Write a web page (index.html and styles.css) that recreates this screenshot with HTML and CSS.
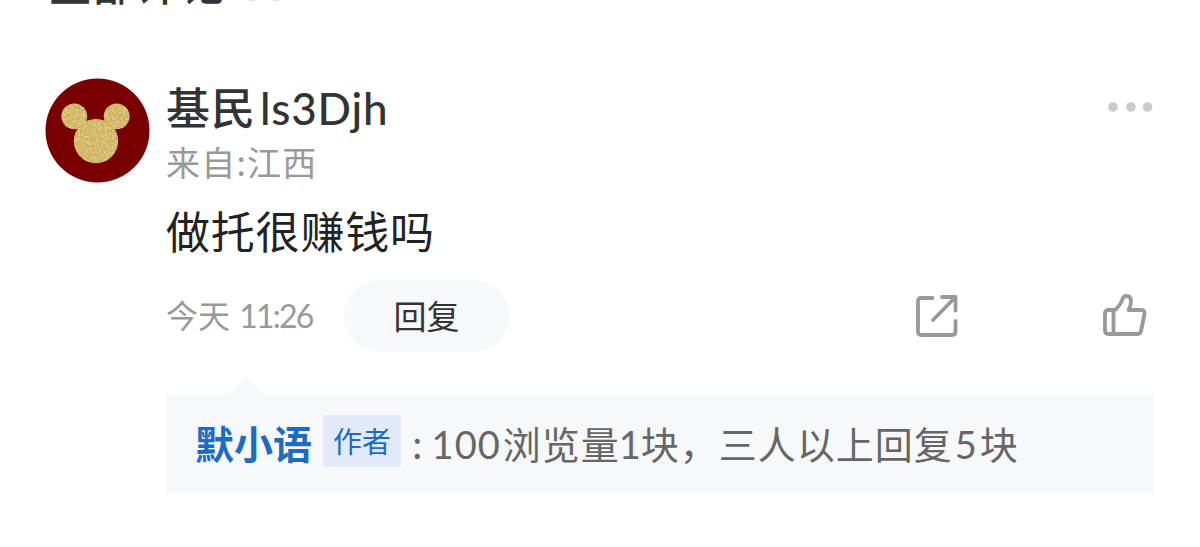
FILE: index.html
```html
<!DOCTYPE html>
<html lang="zh-CN">
<head>
  <meta charset="UTF-8">
  <meta name="viewport" content="width=device-width, initial-scale=1.0">
  <title>全部评论</title>
  <link rel="stylesheet" href="styles.css">
</head>
<body>
  <div class="comments-header">
    <h2>全部评论</h2>
    <span class="count">66</span>
  </div>

  <div class="comment">
    <svg class="avatar" viewBox="0 0 104 104">
      <defs>
        <filter id="glitter" x="0" y="0" width="100%" height="100%">
          <feTurbulence type="fractalNoise" baseFrequency="0.45" numOctaves="2" seed="4" result="noise"/>
          <feColorMatrix in="noise" type="matrix" values="0 0 0 0 1  0 0 0 0 0.93  0 0 0 0 0.6  1.1 0 0 0 -0.45" result="specks"/>
          <feComposite in="specks" in2="SourceGraphic" operator="in" result="gold"/>
          <feMerge>
            <feMergeNode in="SourceGraphic"/>
            <feMergeNode in="gold"/>
          </feMerge>
        </filter>
      </defs>
      <circle cx="52" cy="52" r="51.500" fill="#780002"/>
      <g fill="#d0b25c" filter="url(#glitter)">
        <circle cx="29" cy="38" r="12.800"/>
        <circle cx="71" cy="38" r="12.800"/>
        <circle cx="50.500" cy="62.500" r="22"/>
      </g>
    </svg>

    <div class="comment-main">
      <div class="user-row">
        <div class="username">基民<span class="latin">ls3Djh</span></div>
        <svg class="more" viewBox="0 0 46 12" fill="#cbcbcb">
          <circle cx="6" cy="6" r="4.800"/>
          <circle cx="24" cy="6" r="4.800"/>
          <circle cx="40.500" cy="6" r="4.800"/>
        </svg>
      </div>
      <div class="location">来自:江西</div>
      <p class="comment-text">做托很赚钱吗</p>

      <div class="action-row">
        <span class="time">今天 <span class="latin">11:26</span></span>
        <button class="reply-button">回复</button>
        <svg class="share-icon" viewBox="0 0 44 44">
          <path d="M17.500 4H6Q3 4 3 7V37.500Q3 41 6.500 41H37Q40.500 41 40.500 37.500V27M27 3H40.500V16.500M39.500 4L18 26"/>
        </svg>
        <svg class="like-icon" viewBox="0 0 44 44">
          <path d="M12 16H5.500Q2 16 2 19.500V36.500Q2 40 5.500 40H34.500Q37.500 40 38 37L41.500 20Q42 16 38.500 16H25.500Q28 12 28 7Q28 2 23.500 2Q20.500 2 19.500 5Q17 12 12 16ZM10.500 17V39"/>
        </svg>
      </div>

      <div class="reply-box">
        <span class="reply-name">默小语</span>
        <span class="author-tag">作者</span>
        <span class="reply-text"><span class="colon">:</span><span class="latin hundred">100</span>浏览量<span class="latin one">1</span>块，三人以上回复<span class="latin five">5</span>块</span>
      </div>
    </div>
  </div>
</body>
</html>
```

FILE: styles.css
```css
body {
  margin: 0;
  height: 547px;
  overflow: hidden;
  background-color: #fff;
  color: #333;
  font-family: "Noto Sans CJK SC", sans-serif;
}

.latin {
  font-family: Lato, "Noto Sans CJK SC", sans-serif;
}

.comments-header {
  display: flex;
  align-items: baseline;
  height: 48px;
  margin-top: -42px;
  padding-left: 48px;
  line-height: 48px;
}

.comments-header h2 {
  margin: 0;
  font-size: 44px;
  font-weight: 500;
  letter-spacing: 0.3px;
}

.count {
  margin-left: 16px;
  font-family: Lato, sans-serif;
  font-size: 38px;
  letter-spacing: 2px;
  color: #ddd;
}

.comment {
  display: flex;
  padding: 72px 45px 0;
}

.avatar {
  flex: none;
  width: 105px;
  height: 105px;
}

.comment-main {
  flex: 1;
  margin-left: 15px;
}

.user-row {
  display: flex;
  justify-content: space-between;
  height: 60px;
  padding-left: 1px;
}

.username {
  font-size: 44px;
  font-weight: 500;
  line-height: 57px;
  letter-spacing: 1px;
  white-space: nowrap;
}

.username .latin {
  margin-left: 4px;
  letter-spacing: 0.8px;
}

.more {
  width: 46px;
  height: 12px;
  margin: 23px 2px 0 0;
}

.location {
  height: 48px;
  padding-left: 1px;
  color: #999;
  font-size: 34px;
  line-height: 47px;
  letter-spacing: 1.2px;
}

.comment-text {
  height: 94px;
  margin: 0;
  padding-left: 1px;
  color: #222;
  font-size: 44px;
  line-height: 88px;
  letter-spacing: 0.8px;
}

.action-row {
  display: flex;
  align-items: center;
  height: 72px;
}

.time {
  width: 178px;
  padding: 0 0 4px 1px;
  color: #999;
  font-size: 32px;
  white-space: nowrap;
}

.time .latin {
  margin-left: 2px;
  letter-spacing: -1.8px;
}

.reply-button {
  width: 165px;
  height: 72px;
  border: none;
  border-radius: 36px;
  padding: 0 0 3px;
  background-color: #f7f8fa;
  color: #333;
  font-family: inherit;
  font-size: 33px;
}

.share-icon,
.like-icon {
  width: 44px;
  height: 44px;
  fill: none;
  stroke: #999;
  stroke-width: 3.8;
  stroke-linecap: round;
  stroke-linejoin: round;
}

.share-icon {
  margin-left: auto;
}

.like-icon {
  margin: 0 8px 0 144px;
}

.reply-box {
  position: relative;
  display: flex;
  align-items: center;
  height: 100px;
  margin-top: 42px;
  padding-left: 30px;
  box-sizing: border-box;
  background-color: #f7f8fa;
  white-space: nowrap;
}

/* little arrow that points at the comment above */
.reply-box::before {
  content: "";
  position: absolute;
  top: -18px;
  left: 63px;
  border: 18px solid transparent;
  border-top: none;
  border-bottom-color: #f7f8fa;
}

.reply-name {
  padding-bottom: 4px;
  color: #1f6bc2;
  font-size: 39px;
  font-weight: 700;
}

.author-tag {
  height: 52px;
  margin: -6px 0 0 11px;
  padding: 0 10px;
  border-radius: 3px;
  background-color: #e0eaf8;
  color: #1f6bc2;
  font-size: 29px;
  line-height: 50px;
}

.reply-text {
  margin-left: 11px;
  padding-bottom: 4px;
  color: #666;
  font-size: 38px;
  letter-spacing: 1px;
}

.colon {
  margin-right: 8px;
}

.hundred {
  margin-right: 2px;
}

.one {
  margin: 0 -1px 0 -1px;
}

.five {
  margin: 0 2px;
}
```
